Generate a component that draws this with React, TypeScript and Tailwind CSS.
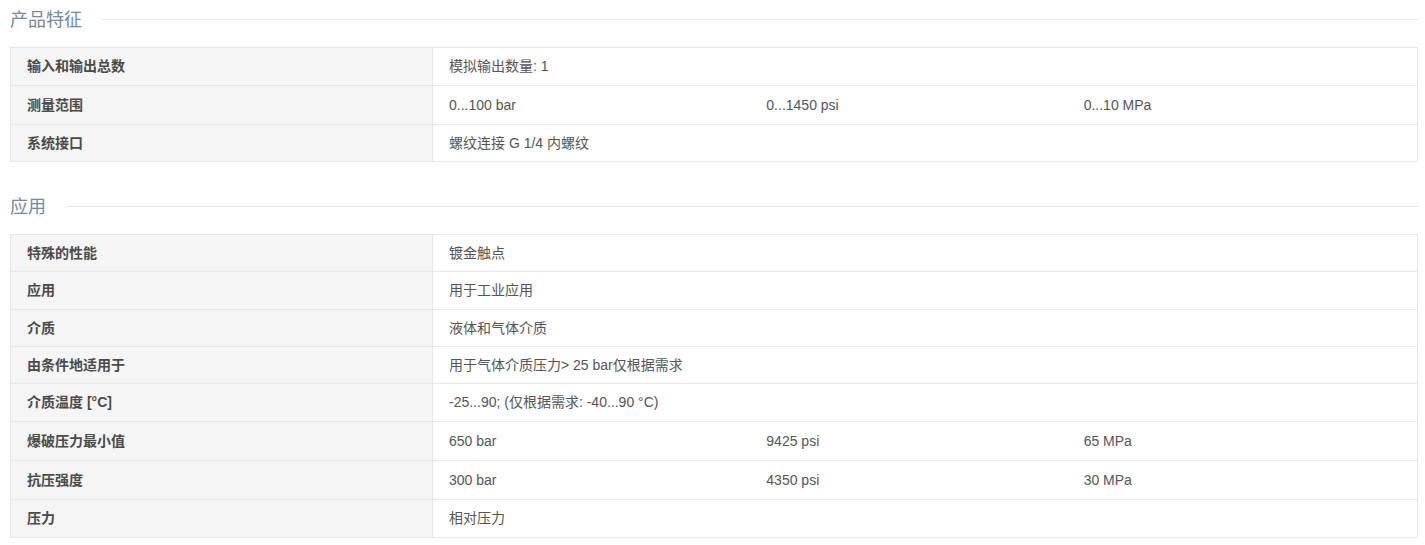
import React from "react";

type Row = { label: string; values: string[]; h: string };

const features: Row[] = [
  { label: "输入和输出总数", values: ["模拟输出数量: 1"], h: "h-[38px]" },
  { label: "测量范围", values: ["0...100 bar", "0...1450 psi", "0...10 MPa"], h: "h-[39px]" },
  { label: "系统接口", values: ["螺纹连接 G 1/4 内螺纹"], h: "h-[37px]" },
];

const application: Row[] = [
  { label: "特殊的性能", values: ["镀金触点"], h: "h-[37px]" },
  { label: "应用", values: ["用于工业应用"], h: "h-[38px]" },
  { label: "介质", values: ["液体和气体介质"], h: "h-[37px]" },
  { label: "由条件地适用于", values: ["用于气体介质压力> 25 bar仅根据需求"], h: "h-[37px]" },
  { label: "介质温度 [°C]", values: ["-25...90; (仅根据需求: -40...90 °C)"], h: "h-[38px]" },
  { label: "爆破压力最小值", values: ["650 bar", "9425 psi", "65 MPa"], h: "h-[39px]" },
  { label: "抗压强度", values: ["300 bar", "4350 psi", "30 MPa"], h: "h-[39px]" },
  { label: "压力", values: ["相对压力"], h: "h-[38px]" },
];

function Heading({ title, className }: { title: string; className?: string }) {
  return (
    <div className={"flex h-[38px] items-center " + (className ?? "")}>
      <span className="mt-[2px] text-[18px] leading-[24px] font-normal text-[#7489a0]">{title}</span>
      <div className="ml-[20px] h-px flex-1 bg-[#e5e5e5]" />
    </div>
  );
}

function Table({ rows }: { rows: Row[] }) {
  return (
    <div className="w-[1408px] border-t border-l border-r border-[#e6e6e6]">
      {rows.map((r) => (
        <div key={r.label} className={"flex border-b border-[#e6e6e6] " + r.h}>
          <div className="flex w-[422px] items-center border-r border-[#e6e6e6] bg-[#f5f5f5] px-4 text-[14px] font-bold text-[#4a4a4a]">
            {r.label}
          </div>
          <div className="grid flex-1 grid-cols-3 items-center px-4 text-[14px] text-[#555555]">
            {r.values.length === 1 ? (
              <div className="col-span-3 whitespace-nowrap">{r.values[0]}</div>
            ) : (
              r.values.map((v) => (
                <div key={v} className="whitespace-nowrap">
                  {v}
                </div>
              ))
            )}
          </div>
        </div>
      ))}
    </div>
  );
}

export default function App() {
  return (
    <div
      className="w-[1425px] h-[545px] bg-white pl-[10px] pr-[7px]"
      style={{ fontFamily: '"Liberation Sans", "Noto Sans CJK SC", sans-serif' }}
    >
      <Heading title="产品特征" />
      <div className="mt-[9px]">
        <Table rows={features} />
      </div>
      <Heading title="应用" className="mt-[25px]" />
      <div className="mt-[9px]">
        <Table rows={application} />
      </div>
    </div>
  );
}
